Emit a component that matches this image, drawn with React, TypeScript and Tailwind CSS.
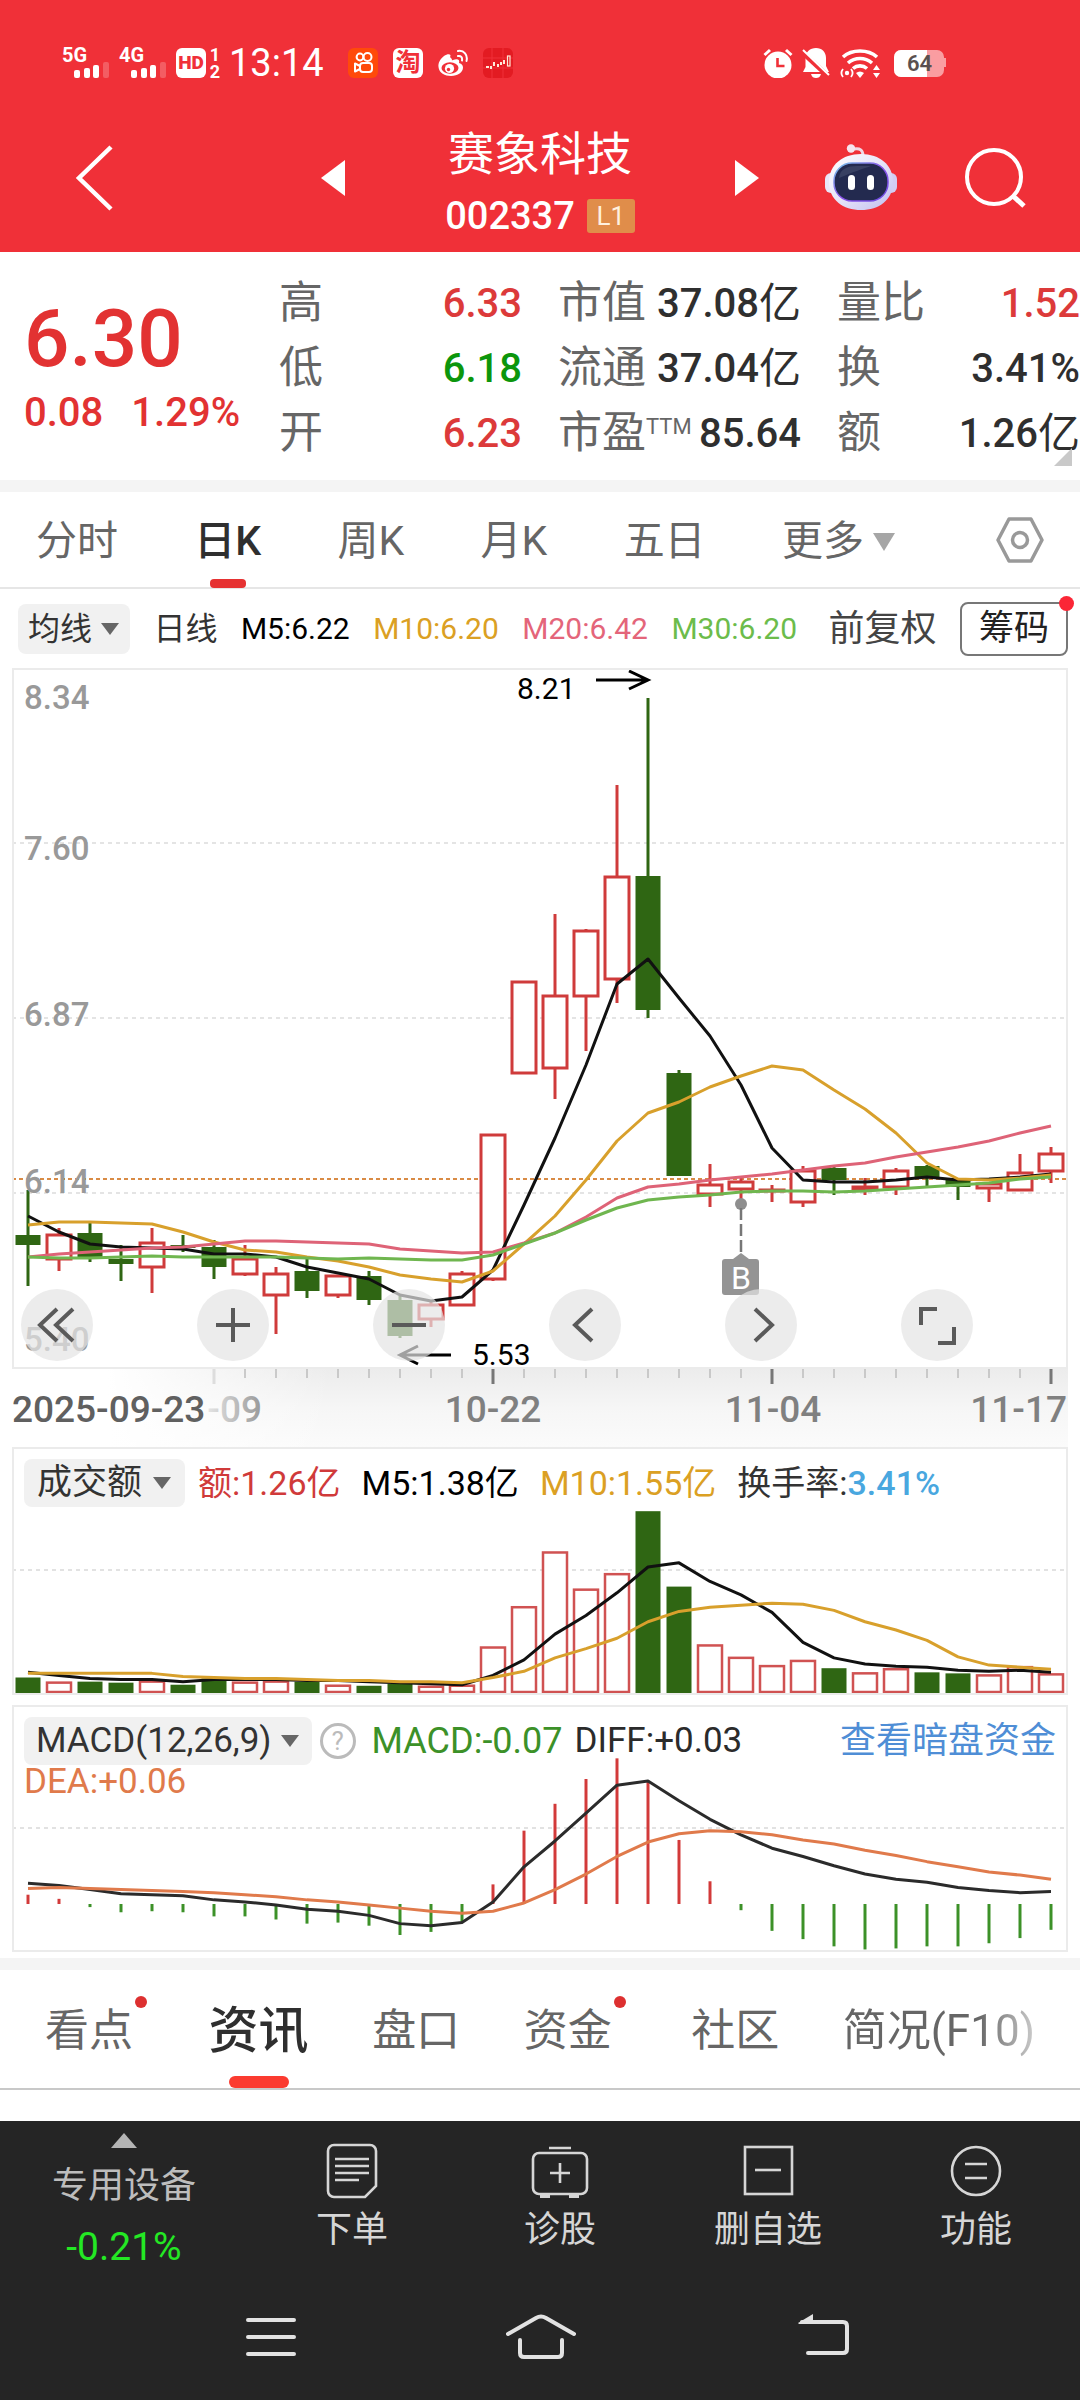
import React from "react";

type Candle = [up: boolean, open: number, close: number, high: number, low: number];

const STEP = 31;
const FIRST_X = 28;
const cx = (i: number) => FIRST_X + i * STEP;

const candles: Candle[] = [
  [false, 1235, 1245, 1190, 1286],
  [true, 1235, 1259, 1228, 1271],
  [false, 1233, 1257, 1223, 1262],
  [false, 1259, 1264, 1245, 1281],
  [true, 1243, 1267, 1228, 1293],
  [false, 1245, 1248, 1235, 1252],
  [false, 1247, 1267, 1240, 1279],
  [true, 1259, 1274, 1245, 1276],
  [true, 1274, 1295, 1267, 1334],
  [false, 1271, 1291, 1259, 1298],
  [true, 1276, 1295, 1275, 1298],
  [false, 1276, 1300, 1271, 1305],
  [false, 1300, 1336, 1296, 1338],
  [true, 1305, 1319, 1301, 1327],
  [true, 1274, 1305, 1271, 1306],
  [true, 1135, 1279, 1134, 1281],
  [true, 982, 1073, 981, 1074],
  [true, 996, 1068, 914, 1099],
  [true, 931, 996, 929, 1051],
  [true, 877, 979, 785, 1003],
  [false, 876, 1010, 698, 1018],
  [false, 1073, 1176, 1070, 1176],
  [true, 1185, 1194, 1164, 1207],
  [true, 1182, 1189, 1178, 1204],
  [true, 1190, 1191, 1185, 1202],
  [true, 1171, 1202, 1166, 1207],
  [false, 1168, 1180, 1167, 1195],
  [true, 1187, 1189, 1178, 1195],
  [true, 1171, 1187, 1168, 1195],
  [false, 1166, 1177, 1165, 1186],
  [false, 1179, 1187, 1179, 1200],
  [true, 1184, 1188, 1183, 1202],
  [true, 1173, 1190, 1154, 1191],
  [true, 1154, 1171, 1147, 1183],
];

const ma5 = [1216, 1232, 1244, 1247, 1248, 1249, 1254, 1254, 1257, 1267, 1273, 1279, 1295, 1301, 1297, 1270, 1205, 1138, 1065, 984, 959, 998, 1036, 1085, 1148, 1180, 1182, 1182, 1180, 1177, 1180, 1179, 1177, 1174];
const ma10 = [1225, 1222, 1222, 1223, 1224, 1232, 1242, 1250, 1252, 1257, 1261, 1267, 1275, 1279, 1282, 1271, 1244, 1216, 1180, 1141, 1113, 1102, 1087, 1076, 1066, 1070, 1090, 1109, 1133, 1163, 1179, 1180, 1178, 1175];
const ma20 = [1257, 1254, 1252, 1250, 1248, 1247, 1244, 1241, 1241, 1242, 1243, 1244, 1249, 1251, 1253, 1252, 1243, 1233, 1217, 1198, 1187, 1184, 1180, 1177, 1174, 1170, 1166, 1163, 1157, 1152, 1147, 1141, 1133, 1126];
const ma30 = [1257, 1258, 1258, 1257, 1256, 1257, 1257, 1257, 1257, 1258, 1259, 1258, 1259, 1260, 1260, 1255, 1244, 1233, 1220, 1208, 1200, 1197, 1195, 1192, 1191, 1191, 1192, 1191, 1189, 1187, 1185, 1183, 1179, 1177];

const volumes = [15, 11, 11, 10, 12, 8, 14, 11, 12, 11, 8, 7, 9, 7, 8, 45, 84, 137, 101, 116, 176, 103, 47, 35, 27, 32, 24, 20, 24, 20, 19, 18, 26, 19];
const volMa5 = [20, 17, 14, 13, 13, 11, 13, 13, 13, 12, 12, 11, 10, 9, 8, 17, 32, 57, 75, 97, 122, 126, 108, 95, 78, 49, 34, 28, 26, 25, 22, 21, 22, 20];
const volMa10 = [19, 19, 19, 19, 19, 16, 15, 14, 14, 13, 12, 12, 11, 11, 10, 15, 21, 34, 43, 53, 69, 79, 83, 85, 87, 86, 80, 69, 61, 51, 35, 27, 25, 23];

const macd = [9, 5, -3, -8, -7, -8, -12, -12, -15, -19, -18, -21, -30, -27, -18, 19, 71, 97, 121, 141, 119, 62, 22, -6, -26, -34, -41, -44, -43, -41, -41, -38, -33, -25];
const diff = [20, 18, 14, 10, 9, 8, 4, 2, -1, -5, -7, -11, -19, -21, -18, 2, 36, 61, 88, 115, 119, 100, 82, 67, 54, 46, 37, 29, 24, 21, 16, 13, 11, 12];
const dea = [15, 16, 15, 14, 13, 12, 11, 9, 7, 4, 2, -1, -4, -7, -9, -7, 1, 14, 29, 46, 60, 68, 71, 70, 67, 62, 58, 52, 47, 41, 36, 31, 28, 24];

const K = 1.033;
const volY = (v: number) => 1693 - v * K;
const macdY = (v: number) => 1904 - v * K;
const same = (v: number) => v;

function Line({ data, color, y = same }: { data: number[]; color: string; y?: (v: number) => number }) {
  return (
    <polyline
      points={data.map((v, i) => `${cx(i)},${y(v)}`).join(" ")}
      fill="none"
      stroke={color}
      strokeWidth="3"
      strokeLinejoin="round"
    />
  );
}

function Caret({ color = "#666" }: { color?: string }) {
  return (
    <svg viewBox="0 0 20 14" className="h-[14px] w-[20px] shrink-0" aria-hidden="true">
      <path d="M1 1h18L10 13z" fill={color} />
    </svg>
  );
}

function CellSignal({ label }: { label: string }) {
  return (
    <div className="relative h-[34px] w-[57px]">
      <span className="absolute -top-[3px] left-0 text-[20px] leading-6 font-bold">{label}</span>
      <svg viewBox="0 0 50 34" className="h-[34px] w-[50px]" aria-hidden="true">
        <rect x="12" y="24" width="6" height="8" rx="2" fill="#fff" />
        <rect x="22" y="22" width="6" height="10" rx="2" fill="#fff" />
        <rect x="31" y="19" width="6" height="13" rx="2" fill="#fff" />
        <rect x="41" y="16" width="6" height="16" rx="2" fill="#fff" fillOpacity=".22" />
      </svg>
    </div>
  );
}

function StatusBar() {
  return (
    <div className="flex h-[88px] items-start justify-between pt-11 pr-[131px] pl-[62px] text-white">
      <div className="flex items-center">
        <CellSignal label="5G" />
        <CellSignal label="4G" />
        <span className="flex size-[30px] items-center justify-center rounded-md bg-white text-[19px] font-black text-[#f03038]">HD</span>
        <span className="ml-[3px] w-3 text-center text-[18px] leading-[17px] font-bold">1<br />2</span>
        <span className="ml-2 w-[94px] text-[38px] leading-[38px]">13:14</span>
        <svg viewBox="0 0 30 30" className="ml-[25px] size-[30px]" aria-hidden="true">
          <rect width="30" height="30" rx="6" fill="#ff4a0a" />
          <g fill="none" stroke="#fff" strokeWidth="2">
            <circle cx="12" cy="9" r="3.400" />
            <circle cx="19.500" cy="9" r="4" />
            <rect x="12" y="15" width="12" height="9" rx="3" />
            <path d="M12 18l-5-2.500v8L12 21" strokeLinejoin="round" />
          </g>
        </svg>
        <span className="ml-[15px] flex size-[30px] items-center justify-center rounded-md bg-white text-[25px] leading-[30px] font-bold text-[#f03038]">淘</span>
        <svg viewBox="0 0 30 28" className="ml-[15px] h-[28px] w-[30px]" aria-hidden="true">
          <path d="M12 8c2-3-2-4-6-1-4 3-6 7-5.500 11C1 24 7 27 13 27c7 0 12-4 12-8.500 0-3-2.500-4-4-4.500 1-3-1-5-6-3-1 .5-1.500.3-1-.8z" fill="#fff" />
          <ellipse cx="12" cy="19" rx="8.500" ry="5.800" fill="#f03038" />
          <circle cx="11.500" cy="19.500" r="4.600" fill="#fff" />
          <circle cx="10.500" cy="20.500" r="1.700" fill="#f03038" />
          <path d="M20 7c3-.5 4.500 1.500 4 4.500M20 2c6-1 10 4 8.500 10" fill="none" stroke="#fff" strokeWidth="2" strokeLinecap="round" />
        </svg>
        <svg viewBox="0 0 30 30" className="ml-[15px] size-[30px]" aria-hidden="true">
          <rect width="30" height="30" rx="6" fill="#e31b22" />
          <path d="M0 10h30M0 20h30M9 0v30M20 0v30" stroke="#f03038" />
          <path d="M3 19h3M8 18v3M11 14v4M15 16v3M18 14v3M21 12v4" stroke="#ffe9d8" strokeWidth="2" />
          <rect x="24.500" y="8" width="2.500" height="10" fill="none" stroke="#ffe9d8" strokeWidth="1.200" />
        </svg>
      </div>
      <div className="flex h-[38px] items-center gap-2">
        <svg viewBox="0 0 30 30" className="size-[30px]" aria-hidden="true">
          <circle cx="15" cy="17" r="13.500" fill="#fff" />
          <path d="M1.500 7 7 2M28.500 7 23 2" stroke="#fff" strokeWidth="3" />
          <path d="M14.500 10v8h7" fill="none" stroke="#f03038" strokeWidth="2.600" />
        </svg>
        <svg viewBox="0 0 30 30" className="size-[30px]" aria-hidden="true">
          <path d="M15 0c6 0 10 4 10 10v8l3 6H2l2.500-5v-9C4.500 4 9 0 15 0zM10 26h10c-1 3-2.500 4-5 4s-4-1-5-4z" fill="#fff" />
          <path d="M0 3 28 29" stroke="#f03038" strokeWidth="5" />
          <path d="M2 2 28 27" stroke="#fff" strokeWidth="2" />
        </svg>
        <svg viewBox="0 0 42 30" className="h-[30px] w-[42px]" aria-hidden="true">
          <g fill="none" stroke="#fff" strokeWidth="3.600">
            <path d="M4 9c9-8 25-8 34 0M9 15c7-6 17-6 24 0M14 20.500c4-3.500 10-3.500 14 0" />
          </g>
          <path d="M17 25c2.500-2 5.500-2 8 0l-4 5z" fill="#fff" />
          <circle cx="8" cy="25" r="2.200" fill="#fff" />
          <path d="M4 21c-2 2.500-2 5.500 0 8M12 21c2 2.500 2 5.500 0 8" fill="none" stroke="#fff" strokeWidth="1.800" />
          <path d="M34 22l3.500-5 3.500 5zM34 25h7l-3.500 5z" fill="#fff" />
        </svg>
        <div className="relative ml-1 h-[30px] w-[56px]">
          <svg viewBox="0 0 56 30" className="h-[30px] w-[56px]" aria-hidden="true">
            <path d="M8 2h36a7 7 0 0 1 7 7v1h2v9h-2v3a7 7 0 0 1-7 7H8a7 7 0 0 1-7-7V9a7 7 0 0 1 7-7z" fill="#fa9da1" />
            <path d="M8 2h26v27H8a7 7 0 0 1-7-7V9a7 7 0 0 1 7-7z" fill="#fff" />
          </svg>
          <span className="absolute inset-y-0 left-0 w-[53px] text-center text-[22px] leading-[31px] font-semibold text-[#5a5050]">64</span>
        </div>
      </div>
    </div>
  );
}

function Robot() {
  return (
    <svg viewBox="0 0 72 68" className="h-[68px] w-[72px]" aria-hidden="true">
      <defs>
        <linearGradient id="shell" x1="0" y1="0" x2="1" y2="1">
          <stop offset="0" stopColor="#ffffff" />
          <stop offset=".5" stopColor="#e6e4f8" />
          <stop offset="1" stopColor="#c0bef0" />
        </linearGradient>
        <linearGradient id="rim" x1="0" y1="0" x2="1" y2="1">
          <stop offset="0" stopColor="#74c7e8" />
          <stop offset=".5" stopColor="#8a52e8" />
          <stop offset="1" stopColor="#6a4be0" />
        </linearGradient>
      </defs>
      <path d="M38 12c0-6-3-8-9-7" fill="none" stroke="#f1d7e4" strokeWidth="3" />
      <circle cx="26" cy="4.500" r="4.200" fill="#f6e4ee" />
      <rect x="0" y="29" width="12" height="20" rx="6" fill="#e9e6f8" />
      <rect x="60" y="29" width="12" height="20" rx="6" fill="#d3cdf2" />
      <path d="M36 10c19 0 32 11 32 28 0 18-14 28-32 28S4 56 4 38C4 21 17 10 36 10z" fill="url(#shell)" />
      <rect x="9" y="19" width="54" height="38" rx="18" fill="#232a4f" stroke="url(#rim)" strokeWidth="1.500" />
      <path d="M14 34c1-9 8-12 18-12h14c-9 3-18 6-32 12z" fill="#46506f" opacity=".6" />
      <rect x="23" y="31" width="7" height="15" rx="3.500" fill="#fff" />
      <rect x="42" y="31" width="7" height="15" rx="3.500" fill="#fff" />
    </svg>
  );
}

function TitleBar() {
  return (
    <div className="grid h-[164px] grid-cols-[1fr_438px_1fr] items-center text-white">
      <button aria-label="返回" className="mt-4 ml-[74px] w-10">
        <svg viewBox="0 0 40 66" className="h-[66px] w-10"><path d="M37 2 5 33l32 31" fill="none" stroke="#fff" strokeWidth="4.500" /></svg>
      </button>
      <div className="flex items-center justify-between">
        <button aria-label="上一只" className="mt-4">
          <svg viewBox="0 0 24 36" className="h-9 w-6"><path d="M24 0v36L0 18z" fill="#fff" /></svg>
        </button>
        <div className="flex flex-col items-center pt-[28px]">
          <h1 className="text-[46px] leading-[64px]">赛象科技</h1>
          <div className="flex items-center gap-3 text-[38px] leading-[60px] font-medium">
            002337
            <span className="w-12 rounded-[3px] bg-[#e08d4a] text-center text-[26px] leading-[34px] font-normal text-[#fff0df]">L1</span>
          </div>
        </div>
        <button aria-label="下一只" className="mt-4">
          <svg viewBox="0 0 24 36" className="h-9 w-6"><path d="M0 0v36l24-18z" fill="#fff" /></svg>
        </button>
      </div>
      <div className="mt-4 flex items-center justify-between pr-[53px] pl-[66px]">
        <button aria-label="助手"><Robot /></button>
        <button aria-label="搜索">
          <svg viewBox="0 0 62 62" className="size-[62px]"><circle cx="29" cy="30" r="27" fill="none" stroke="#fff" strokeWidth="4" /><path d="m48 49 11 10" stroke="#fff" strokeWidth="5" /></svg>
        </button>
      </div>
    </div>
  );
}

function Stat({ label, sup, value, unit, color = "text-[#2f2f2f]" }: { label: string; sup?: string; value: string; unit?: string; color?: string }) {
  return (
    <div className="flex h-[65px] items-center justify-between whitespace-nowrap">
      <dt className="flex text-[44px] leading-[65px] text-[#666]">
        {label}
        {sup && <sup className="top-0 pt-[14px] text-[22px] leading-[24px]">{sup}</sup>}
      </dt>
      <dd className={`flex items-center text-[40px] font-medium ${color}`}>
        {value}
        {unit && <span className="text-[42px] leading-[65px] font-normal">{unit}</span>}
      </dd>
    </div>
  );
}

function Quote() {
  const red = "text-[#dc3a3a]";
  return (
    <section className="relative grid h-[228px] grid-cols-[255px_243px_36px_243px_36px_1fr] pt-[19px] pl-6">
      <div className="text-[#e23232]">
        <div className="pt-[18px] text-[80px] leading-[100px] font-medium">6.30</div>
        <div className="flex gap-7 text-[40px] leading-[48px] font-medium">
          <span>0.08</span>
          <span>1.29%</span>
        </div>
      </div>
      <dl>
        <Stat label="高" value="6.33" color={red} />
        <Stat label="低" value="6.18" color="text-[#0c960c]" />
        <Stat label="开" value="6.23" color={red} />
      </dl>
      <dl className="col-start-4">
        <Stat label="市值" value="37.08" unit="亿" />
        <Stat label="流通" value="37.04" unit="亿" />
        <Stat label="市盈" sup="TTM" value="85.64" />
      </dl>
      <dl className="col-start-6">
        <Stat label="量比" value="1.52" color={red} />
        <Stat label="换" value="3.41%" />
        <Stat label="额" value="1.26" unit="亿" />
      </dl>
      <svg viewBox="0 0 18 18" className="absolute right-2 bottom-[14px] size-[18px]" aria-hidden="true"><path d="M18 0v18H0z" fill="#c9c9c9" /></svg>
    </section>
  );
}

function PeriodTabs() {
  return (
    <nav className="flex h-[97px] items-center justify-between border-b-2 border-[#e6e6e6] px-9 text-[41px] text-[#666]">
      <div className="flex h-full w-[860px] items-center justify-between pt-1">
        <button>分时</button>
        <button className="relative -mt-1 flex h-[96px] items-center pt-1 font-medium text-[#2f2f2f]">
          日K
          <span className="absolute bottom-0 left-1/2 h-[9px] w-9 -translate-x-1/2 rounded-[4px] bg-[#e63232]" />
        </button>
        <button>周K</button>
        <button>月K</button>
        <button>五日</button>
        <button className="flex items-center gap-2">
          更多
          <svg viewBox="0 0 24 18" className="h-[18px] w-[24px]" aria-hidden="true"><path d="M1 0h22L12 18z" fill="#a6a6a6" /></svg>
        </button>
      </div>
      <button aria-label="设置">
        <svg viewBox="0 0 48 48" className="size-12" fill="none" stroke="#999" strokeWidth="3.500"><path d="M13 3h22l11 21-11 21H13L2 24z" strokeLinejoin="round" /><circle cx="24" cy="24" r="7.500" /></svg>
      </button>
    </nav>
  );
}

function Legend() {
  return (
    <div className="flex h-[79px] items-center justify-between pr-3 pl-[18px] text-[30px]">
      <button className="flex h-[50px] items-center gap-2 rounded-lg bg-[#f1f1f1] px-[10px] text-[32px] text-[#333]">
        均线 <Caret />
      </button>
      <span className="text-[32px] text-[#333]">日线</span>
      <span className="text-black">M5:6.22</span>
      <span className="text-[#dba023]">M10:6.20</span>
      <span className="text-[#e4657a]">M20:6.42</span>
      <span className="text-[#6cbc4b]">M30:6.20</span>
      <span className="ml-2 text-[36px] text-[#444]">前复权</span>
      <button className="relative h-[54px] w-[108px] rounded-lg border-2 border-[#777] text-[35px] leading-[50px] text-[#222]">
        筹码
        <span className="absolute -top-2 -right-2 size-[15px] rounded-full bg-[#fb2636]" />
      </button>
    </div>
  );
}

const ctrl = "flex size-[72px] items-center justify-center rounded-full bg-[#e4e4e4]/70";

function Controls() {
  const icons: [string, string][] = [
    ["最早", "M18 2 1 18l17 16M34 2 17 18l17 16"],
    ["放大", "M18 1v34M1 18h34"],
    ["缩小", "M1 18h34"],
    ["向左", "M25 2 8 18l17 16"],
    ["向右", "M12 2l17 16-17 16"],
    ["全屏", "M2 18V2h16M35 20v16H19"],
  ];
  return (
    <div className="absolute bottom-[6px] left-[7px] flex w-[90.5%] justify-between">
      {icons.map(([name, d]) => (
        <button key={name} aria-label={name} className={ctrl}>
          <svg viewBox="0 0 36 36" className="size-9 overflow-visible"><path d={d} fill="none" stroke="#5a5a5a" strokeWidth="4" /></svg>
        </button>
      ))}
    </div>
  );
}

function PriceChart() {
  const labels: [string, number][] = [["8.34", 709], ["7.60", 860], ["6.87", 1026], ["6.14", 1193], ["5.40", 1351]];
  return (
    <div className="relative mx-3 border-2 border-[#ebebeb]">
      <svg viewBox="14 670 1052 697" className="block w-full" role="img" aria-label="日K线">
        {[843, 1018, 1193].map((y) => (
          <path key={y} d={`M12 ${y}H1068`} stroke="#dcdcdc" strokeWidth="1.500" strokeDasharray="4 4" />
        ))}
        <path d="M12 1179H1068" stroke="#d98b45" strokeWidth="2" strokeDasharray="4 3" />
        {candles.map(([up, top, bottom, high, low], i) =>
          up ? (
            <g key={i} stroke="#cf3b3b" strokeWidth="3">
              <path d={`M${cx(i)} ${high}V${low}`} />
              <rect x={cx(i) - 12} y={top} width="24" height={bottom - top} fill="#fff" />
            </g>
          ) : (
            <g key={i} fill="#2f6613">
              <rect x={cx(i) - 1.5} y={high} width="3" height={low - high} />
              <rect x={cx(i) - 12.5} y={top} width="25" height={bottom - top} />
            </g>
          ),
        )}
        {labels.map(([t, y]) => (
          <text key={t} x="24" y={y} fontSize="33" fontWeight="500" fill="#999">{t}</text>
        ))}
        <Line data={ma5} color="#111" />
        <Line data={ma10} color="#d8a02c" />
        <Line data={ma20} color="#de6377" />
        <Line data={ma30} color="#6fb64f" />
        <text x="517" y="699" fontSize="30" fill="#000">8.21</text>
        <path d="M596 680h51M629 671l19 9-19 9" fill="none" stroke="#000" strokeWidth="3" />
        <text x="472" y="1365" fontSize="30" fill="#000">5.53</text>
        <path d="M451 1355h-50M418 1346l-18 9 18 9" fill="none" stroke="#000" strokeWidth="3" />
        <circle cx="741" cy="1204" r="6" fill="#8e8e8e" />
        <path d="M741 1208v48" stroke="#777" strokeWidth="2.500" strokeDasharray="12 4" />
        <path d="M741 1253l8 6h7a3 3 0 0 1 3 3v30a3 3 0 0 1-3 3h-31a3 3 0 0 1-3-3v-30a3 3 0 0 1 3-3h8z" fill="#949494" />
        <text x="741" y="1289" fontSize="32" fill="#fff" textAnchor="middle">B</text>
      </svg>
      <Controls />
    </div>
  );
}

function TimeAxis() {
  const ticks = Array.from({ length: 28 }, (_, k) => k + 6);
  return (
    <div className="mx-3 bg-linear-to-b from-[#ececec] via-[#f6f6f6] to-[#fbfbfb]">
      <svg viewBox="12 1369 1056 78" className="block w-full" aria-label="日期轴">
        <defs>
          <linearGradient id="veil"><stop offset=".3" stopColor="#fff" /><stop offset="1" stopColor="#fff" stopOpacity="0" /></linearGradient>
          <linearGradient id="fade"><stop offset="0" stopColor="#e4e4e4" /><stop offset="1" stopColor="#999" /></linearGradient>
        </defs>
        <rect x="12" y="1369" width="320" height="78" fill="url(#veil)" />
        {ticks.map((i) => {
          const major = i % 9 === 6;
          return (
            <path
              key={i}
              d={`M${cx(i)} 1369v${major ? 15 : 9}`}
              stroke={i === 6 ? "#ddd" : major ? "#777" : "#bdbdbd"}
              strokeWidth={major ? 3 : 1.5}
            />
          );
        })}
        <g fontSize="37" fontWeight="500" fill="#808080">
          <text x="12" y="1422" fill="#606060">2025-09-23</text>
          <text x="262" y="1422" fill="url(#fade)" textAnchor="end">-09</text>
          <text x="493" y="1422" textAnchor="middle">10-22</text>
          <text x="773" y="1422" textAnchor="middle">11-04</text>
          <text x="1067" y="1422" textAnchor="end">11-17</text>
        </g>
      </svg>
    </div>
  );
}

function VolumeChart() {
  return (
    <div className="relative mx-3 border-2 border-[#ebebeb]">
      <svg viewBox="14 1449 1052 244" className="block w-full" role="img" aria-label="成交额">
        <path d="M12 1570H1068" stroke="#e2e2e2" strokeWidth="2" strokeDasharray="4 4" />
        {volumes.map((v, i) =>
          candles[i][0] ? (
            <rect key={i} x={cx(i) - 12} y={volY(v) + 1} width="24" height={v * K - 2} fill="#fff" stroke="#d05252" strokeWidth="2.500" />
          ) : (
            <rect key={i} x={cx(i) - 12.5} y={volY(v)} width="25" height={v * K} fill="#2f6613" />
          ),
        )}
        <Line data={volMa5} color="#111" y={volY} />
        <Line data={volMa10} color="#d8a02c" y={volY} />
      </svg>
      <div className="absolute top-[10px] left-[10px] flex items-center gap-[21px] text-[34px] leading-[48px] whitespace-nowrap">
        <button className="-mr-2 flex h-12 items-center gap-[10px] rounded-lg bg-[#f1f1f1] px-[13px] text-[35px] text-[#333]">
          成交额 <Caret />
        </button>
        <span className="text-[#d03a3a]">额:1.26亿</span>
        <span className="text-black">M5:1.38亿</span>
        <span className="text-[#dba023]">M10:1.55亿</span>
        <span className="text-[#333]">换手率:<span className="font-medium text-[#49a7df]">3.41%</span></span>
      </div>
    </div>
  );
}

function MacdChart() {
  return (
    <div className="relative mx-3 mt-[10px] border-2 border-[#ebebeb]">
      <svg viewBox="14 1707 1052 243" className="block w-full" role="img" aria-label="MACD">
        <path d="M12 1828H1068" stroke="#e2e2e2" strokeWidth="2" strokeDasharray="4 4" />
        {macd.map((v, i) => (
          <path key={i} d={`M${cx(i)} 1904V${macdY(v)}`} stroke={v > 0 ? "#d23a3a" : "#3c9128"} strokeWidth="3" />
        ))}
        <Line data={diff} color="#2b2b2b" y={macdY} />
        <Line data={dea} color="#e07a4b" y={macdY} />
      </svg>
      <div className="absolute inset-x-[10px] top-[10px] text-[35px] whitespace-nowrap">
        <div className="flex h-12 items-center">
          <button className="flex h-12 items-center gap-[8px] rounded-lg bg-[#f1f1f1] px-3 text-[#333]">
            MACD(12,26,9) <Caret />
          </button>
          <button aria-label="说明" className="ml-2 flex size-9 items-center justify-center rounded-full border-3 border-[#bbb] text-[26px] leading-none text-[#bbb]">?</button>
          <span className="ml-4 text-[36px] text-[#3c9128]">MACD:-0.07</span>
          <span className="ml-3 text-[#2b2b2b]">DIFF:+0.03</span>
          <a href="#funds" className="ml-auto text-[36px] text-[#4f8ed6]">查看暗盘资金</a>
        </div>
        <div className="leading-[34px] text-[#e07a4b]">DEA:+0.06</div>
      </div>
    </div>
  );
}

function SectionTabs() {
  const dot = <span className="absolute -top-[2px] -right-[14px] size-3 rounded-full bg-[#dd3030]" />;
  return (
    <nav className="flex h-[120px] items-center justify-between border-b-2 border-[#c8c8c8] px-[45px] text-[44px] text-[#666]">
      <button className="relative mt-1">看点{dot}</button>
      <button className="relative ml-3 flex h-full items-center pt-1 text-[50px] font-medium text-[#2f2f2f]">
        资讯
        <span className="absolute bottom-0 left-1/2 h-3 w-[60px] -translate-x-1/2 rounded-[6px] bg-[#fb3b30]" />
      </button>
      <button className="mt-1">盘口</button>
      <button className="relative mt-1">资金{dot}</button>
      <button className="mt-1 ml-4">社区</button>
      <button className="mt-1 bg-linear-to-r from-[#666] from-70% to-[#ccc] bg-clip-text text-transparent">简况(F10)</button>
    </nav>
  );
}

function ActionBar() {
  const actions: [string, React.ReactNode][] = [
    ["下单", <><path d="M10 3h36a6 6 0 0 1 6 6v35L41 55H10a6 6 0 0 1-6-6V9a6 6 0 0 1 6-6z" /><path d="M11 17h34M11 24h34M11 31h34M11 38h24" /></>],
    ["诊股", <><rect x="1" y="11" width="54" height="41" rx="6" /><path d="M17 6h22M28 21v20M18 31h20" /><path d="M8 54h10M37 54h10" strokeWidth="4" /></>],
    ["删自选", <><rect x="5" y="5" width="47" height="47" /><path d="M15 28h26" /></>],
    ["功能", <><circle cx="28" cy="29" r="24" /><path d="M17 22h22M17 36h22" /></>],
  ];
  return (
    <div className="grid h-[172px] grid-cols-[248px_repeat(4,1fr)] text-[36px] text-[#d6d6d6]">
      <button className="flex flex-col items-center pt-3 text-[#bdbdbd]">
        <svg viewBox="0 0 26 15" className="h-[15px] w-[26px]" aria-hidden="true"><path d="M13 0l13 15H0z" fill="#b5b5b5" /></svg>
        <span className="mt-[10px] leading-[56px]">专用设备</span>
        <span className="text-[39px] leading-[66px] text-[#24e824]">-0.21%</span>
      </button>
      {actions.map(([label, icon]) => (
        <button key={label} className="flex flex-col items-center pt-[21px]">
          <svg viewBox="0 0 56 58" className="h-[58px] w-[56px] overflow-visible" fill="none" stroke="#d6d6d6" strokeWidth="2.600">{icon}</svg>
          <span className="leading-[60px]">{label}</span>
        </button>
      ))}
    </div>
  );
}

function SystemNav() {
  return (
    <div className="flex h-[107px] items-start pt-[21px] pl-[246px]">
      <button aria-label="菜单">
        <svg viewBox="0 0 50 46" className="h-[46px] w-[50px]" stroke="#e2e2e2" strokeWidth="4" strokeLinecap="round"><path d="M2 6h46M2 23h46M2 40h46" /></svg>
      </button>
      <button aria-label="主页" className="ml-[210px]">
        <svg viewBox="0 0 70 46" className="h-[46px] w-[70px]" fill="none" stroke="#e2e2e2" strokeWidth="4" strokeLinecap="round" strokeLinejoin="round"><path d="M2 20 30 4q5-3 10 0l28 16M14 26v13q0 4 4 4h34q4 0 4-4V26" /></svg>
      </button>
      <button aria-label="返回上一级" className="ml-[222px]">
        <svg viewBox="0 0 52 46" className="h-[46px] w-[52px]" fill="none" stroke="#e2e2e2" strokeWidth="4" strokeLinecap="round"><path d="M4 8h41q4 0 4 4v23q0 4-4 4H10" /><path d="M0 9 15 0v10H1z" fill="#e2e2e2" stroke="none" /></svg>
      </button>
    </div>
  );
}

export default function App() {
  return (
    <div className="flex min-h-screen flex-col overflow-hidden bg-white font-['Roboto','Noto_Sans_CJK_SC',sans-serif]">
      <header className="bg-[#f03038]">
        <StatusBar />
        <TitleBar />
      </header>
      <Quote />
      <div className="h-3 bg-[#f4f4f4]" />
      <PeriodTabs />
      <Legend />
      <PriceChart />
      <TimeAxis />
      <VolumeChart />
      <MacdChart />
      <div className="mt-[6px] h-3 bg-[#f4f4f4]" />
      <SectionTabs />
      <footer className="mt-auto bg-[#252525]">
        <ActionBar />
        <SystemNav />
      </footer>
    </div>
  );
}
